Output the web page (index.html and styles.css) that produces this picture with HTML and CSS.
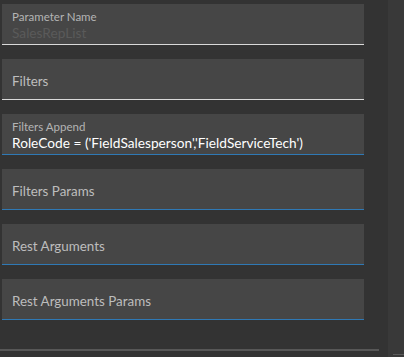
FILE: index.html
```html
<!DOCTYPE html>
<html>
<head>
<meta charset="utf-8">
<link rel="stylesheet" href="styles.css">
</head>
<body>
<div class="page">
  <div class="main">
    <div class="form">
      <div class="field light">
        <div class="label">Parameter Name</div>
        <div class="value disabled">SalesRepList</div>
      </div>
      <div class="field light">
        <div class="placeholder">Filters</div>
      </div>
      <div class="field blue">
        <div class="label">Filters Append</div>
        <div class="value">RoleCode = ('FieldSalesperson','FieldServiceTech')</div>
      </div>
      <div class="field blue">
        <div class="placeholder">Filters Params</div>
      </div>
      <div class="field blue">
        <div class="placeholder">Rest Arguments</div>
      </div>
      <div class="field blue">
        <div class="placeholder">Rest Arguments Params</div>
      </div>
    </div>
    <div class="rule"></div>
  </div>
  <div class="side">
    <div class="side-line"></div>
  </div>
</div>
</body>
</html>
```
FILE: styles.css
```css
* { box-sizing: border-box; }
html, body {
  margin: 0;
  padding: 0;
  background: #333333;
  width: 404px;
  height: 357px;
  overflow: hidden;
  font-family: "Lato", "Noto Sans", sans-serif;
}
.page {
  display: flex;
  height: 357px;
}
.main {
  width: 388px;
  display: flex;
  flex-direction: column;
}
.form {
  display: flex;
  flex-direction: column;
  gap: 14px;
  padding: 4px 0 0 2px;
  width: 364px;
}
.field {
  height: 41px;
  background: #464646;
  padding: 0 10px;
  display: flex;
  flex-direction: column;
  justify-content: center;
}
.field.light { border-bottom: 1px solid #d9d9d9; }
.field.blue { border-bottom: 1px solid #2f79b5; }
.label {
  font-size: 11.5px;
  line-height: 15px;
  color: #b4b4b4;
  margin-top: 2px;
}
.value {
  font-size: 13.7px;
  line-height: 18px;
  color: #ffffff;
}
.value.disabled { color: #5a5a5a; }
.placeholder {
  font-size: 13.4px;
  line-height: 18px;
  color: #bdbdbd;
  margin-top: 4px;
}
.rule {
  margin-top: 29px;
  width: 379px;
  height: 2px;
  background: #575757;
}
.side {
  flex: 1;
  background: #393939;
  display: flex;
  flex-direction: column;
  justify-content: flex-end;
  align-items: flex-end;
  padding-bottom: 2px;
}
.side-line {
  width: 11px;
  height: 1px;
  background: #5a5a5a;
}
```
